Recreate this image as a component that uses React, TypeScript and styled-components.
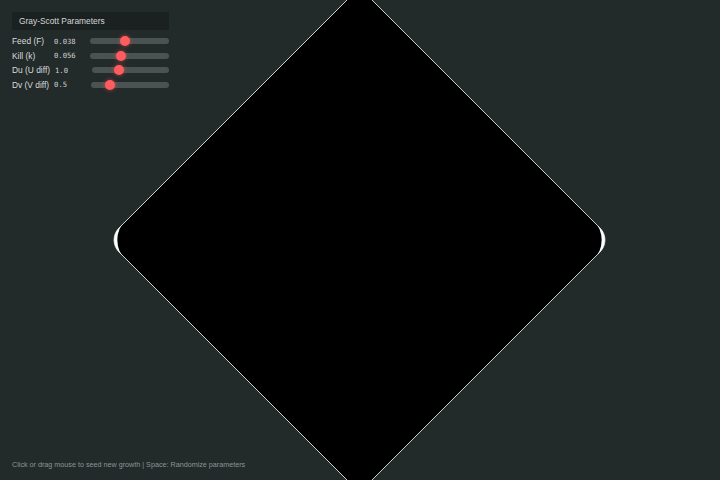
import * as React from 'react';
import styled, { createGlobalStyle } from 'styled-components';

const GlobalStyle = createGlobalStyle`
  html, body {
    margin: 0;
    padding: 0;
    background: #222a2a;
    overflow: hidden;
  }
`;

const Stage = styled.div`
  position: relative;
  width: 720px;
  height: 480px;
  background: #222a2a;
  font-family: 'Liberation Sans', Arial, sans-serif;
`;

const Canvas = styled.svg`
  display: block;
  width: 720px;
  height: 480px;
`;

const Panel = styled.div`
  position: absolute;
  left: 12px;
  top: 12px;
  width: 157px;
  display: flex;
  flex-direction: column;
`;

const Title = styled.div`
  height: 18px;
  line-height: 18px;
  padding-left: 7px;
  margin-bottom: 4px;
  background: #1b2121;
  color: #d2d6d6;
  font-size: 8.4px;
`;

const Row = styled.div`
  display: flex;
  align-items: center;
  height: 14.5px;
`;

const Label = styled.span`
  min-width: 37px;
  margin-right: 5px;
  color: #d8dcdc;
  font-size: 8.4px;
  white-space: nowrap;
`;

const Value = styled.span<{ $w: number }>`
  width: ${(p) => p.$w}px;
  flex-shrink: 0;
  color: #cdd1d1;
  font-family: 'DejaVu Sans Mono', 'Liberation Mono', monospace;
  font-size: 7.2px;
`;

const Slider = styled.input`
  -webkit-appearance: none;
  appearance: none;
  flex: 1;
  min-width: 0;
  height: 10px;
  margin: 0;
  background: transparent;

  &::-webkit-slider-runnable-track {
    height: 6px;
    border-radius: 3px;
    background: #4a5252;
  }
  &::-webkit-slider-thumb {
    -webkit-appearance: none;
    width: 10px;
    height: 10px;
    margin-top: -2px;
    border-radius: 50%;
    background: #ff5c5f;
    box-shadow: 0 0 4px rgba(255, 80, 80, 0.65);
  }
`;

const Hint = styled.div`
  position: absolute;
  left: 12px;
  bottom: 11px;
  color: #8e9595;
  font-size: 7.2px;
`;

const params = [
  { label: 'Feed (F)', value: 0.038, text: '0.038', min: 0.01, max: 0.075, step: 0.001, w: 36 },
  { label: 'Kill (k)', value: 0.056, text: '0.056', min: 0.03, max: 0.1, step: 0.001, w: 36 },
  { label: 'Du (U diff)', value: 1.0, text: '1.0', min: 0.5, max: 2, step: 0.1, w: 37 },
  { label: 'Dv (V diff)', value: 0.5, text: '0.5', min: 0.25, max: 1.5, step: 0.05, w: 37 },
];

// diamond-shaped growth pattern, centre (359.5, 240)
const shape =
  'M 359.5 -12.5 L 600 228 A 17 17 0 0 1 600 252 L 359.5 492.5 L 119 252 A 17 17 0 0 1 119 228 Z';

// bright crescent rims on the rounded left / right tips
const rimRight = 'M 597 225 L 600 228 A 17 17 0 0 1 600 252 L 597 255 L 599.5 251 A 30 30 0 0 0 599.5 229 Z';
const rimLeft = 'M 122 255 L 119 252 A 17 17 0 0 1 119 228 L 122 225 L 119.5 229 A 30 30 0 0 0 119.5 251 Z';

function App() {
  return (
    <Stage>
      <GlobalStyle />
      <Canvas viewBox="0 0 720 480">
        <path d={shape} fill="#000" stroke="#c9d0d0" strokeWidth={1} />
        <path d={rimRight} fill="#fff" />
        <path d={rimLeft} fill="#fff" />
      </Canvas>
      <Panel>
        <Title>Gray-Scott Parameters</Title>
        {params.map((p) => (
          <Row key={p.label}>
            <Label>{p.label}</Label>
            <Value $w={p.w}>{p.text}</Value>
            <Slider type="range" min={p.min} max={p.max} step={p.step} defaultValue={p.value} />
          </Row>
        ))}
      </Panel>
      <Hint>Click or drag mouse to seed new growth | Space: Randomize parameters</Hint>
    </Stage>
  );
}

export default App;
